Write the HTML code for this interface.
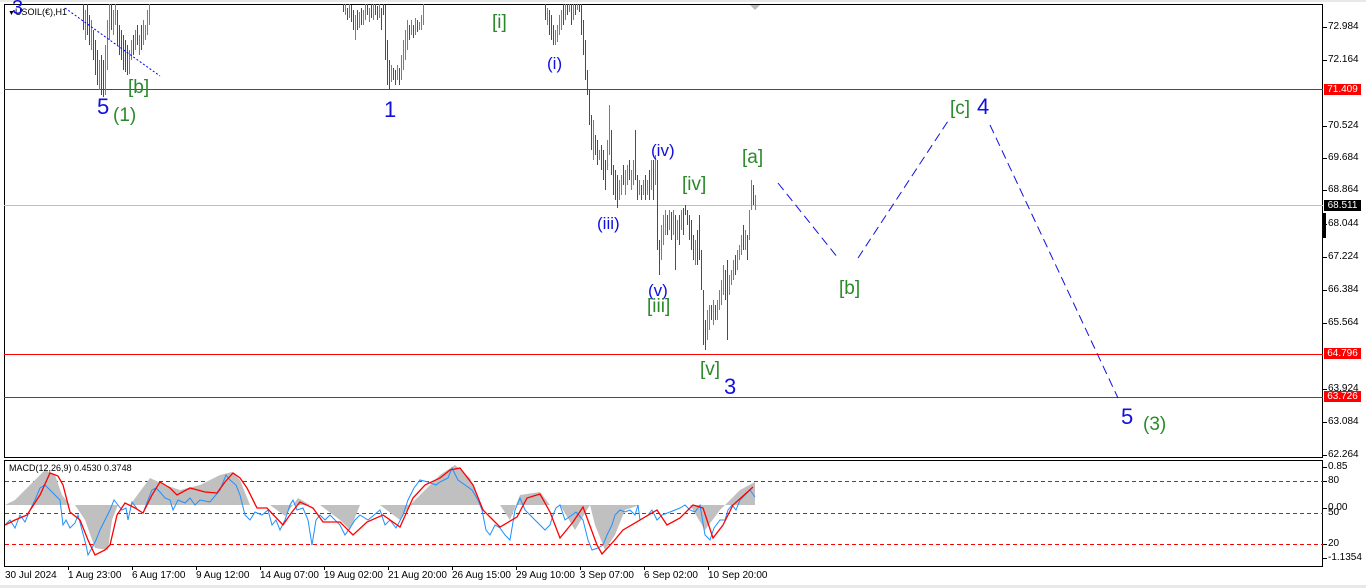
<!DOCTYPE html>
<html><head><meta charset="utf-8"><style>
body{margin:0;width:1366px;height:588px;background:#fff;overflow:hidden;font-family:"Liberation Sans",sans-serif;position:relative}
.l{position:absolute;white-space:nowrap;line-height:1}
.b{color:#1010e0;font-size:22px}
.g{color:#2a8a2a;font-size:19px}
.bs{color:#1010e0;font-size:17px}
.ax{position:absolute;font-size:10px;color:#000;left:1328px}
.t{position:absolute;font-size:10px;top:570px}
.tag{position:absolute;left:1324px;width:37px;height:11px;font-size:10px;line-height:11px;color:#fff;text-align:center}
</style></head><body>
<svg width="1366" height="588" style="position:absolute;left:0;top:0">
<rect x="0" y="0" width="1366" height="588" fill="#fff"/>
<rect x="0" y="0" width="1366" height="2" fill="#e8e8e8"/>
<rect x="0" y="585" width="1366" height="3" fill="#e8e8e8"/>
<rect x="4.5" y="4.5" width="1318" height="453" fill="none" stroke="#000"/>
<rect x="4.5" y="460.5" width="1318" height="106" fill="none" stroke="#000"/>
<line x1="4" y1="205.5" x2="1323" y2="205.5" stroke="#c0c0c0"/>
<line x1="4" y1="89.5" x2="1323" y2="89.5" stroke="#ff0000"/>
<line x1="4" y1="354.5" x2="1323" y2="354.5" stroke="#ff0000"/>
<line x1="4" y1="397.5" x2="1323" y2="397.5" stroke="#ff0000"/>
<path stroke="#000" d="M1323 27.5h4M1323 60.5h4M1323 126.5h4M1323 158.5h4M1323 190.5h4M1323 224.5h4M1323 257.5h4M1323 290.5h4M1323 323.5h4M1323 389.5h4M1323 422.5h4M1323 455.5h4M1323 467.5h4M1323 481.5h4M1323 508.5h4M1323 544.5h4M1323 558.5h4M68.5 566v4M132.5 566v4M196.5 566v4M260.5 566v4M324.5 566v4M388.5 566v4M452.5 566v4M516.5 566v4M580.5 566v4M644.5 566v4M708.5 566v4"/>
<rect x="1323" y="213" width="3" height="25" fill="#000"/>
<path stroke="#ff0000" stroke-width="1" d="M83.5 4V30M87.5 4V35M89.5 15V45M93.5 30V60M95.5 40V75M97.5 50V85M101.5 55V95M103.5 60V97M111.5 4V30M117.5 10V45M119.5 25V55M121.5 30V60M123.5 35V70M125.5 40V72M127.5 45V75M133.5 35V55M137.5 25V45M141.5 25V50M343.5 4V12M347.5 8V20M351.5 5V22M353.5 10V30M357.5 10V30M361.5 8V25M367.5 4V15M371.5 4V18M375.5 4V15M377.5 6V20M381.5 8V30M383.5 4V15M385.5 5V60M387.5 40V85M389.5 60V89M393.5 68V80M395.5 70V85M399.5 68V85M409.5 25V40M413.5 25V38M417.5 20V32M545.5 4V20M549.5 10V35M551.5 15V40M553.5 25V45M563.5 4V25M567.5 4V15M571.5 4V25M575.5 4V15M579.5 4V12M581.5 4V35M583.5 20V55M585.5 40V80M587.5 70V95M589.5 90V125M591.5 115V150M595.5 135V155M597.5 140V165M601.5 145V170M603.5 150V180M605.5 160V190M611.5 130V175M613.5 165V195M615.5 170V200M617.5 175V208M623.5 165V185M629.5 160V180M635.5 130V180M637.5 175V200M641.5 185V200M645.5 175V200M649.5 170V200M653.5 160V200M657.5 160V250M659.5 240V275M667.5 215V235M671.5 212V240M675.5 215V270M679.5 215V245M683.5 208V235M685.5 205V215M687.5 210V225M689.5 215V240M691.5 220V250M693.5 235V260M697.5 230V265M699.5 215V260M701.5 250V290M703.5 290V345M705.5 320V350M711.5 305V320M715.5 305V320M725.5 270V300M727.5 260V340M735.5 255V275M743.5 225V250M747.5 235V260M753.5 185V205"/>
<path stroke="#22bb22" stroke-width="1" d="M85.5 10V40M91.5 20V50M99.5 60V90M105.5 45V95M107.5 20V70M109.5 4V40M113.5 10V35M115.5 4V25M129.5 50V74M131.5 40V60M135.5 30V50M139.5 35V55M143.5 20V45M145.5 25V40M147.5 10V35M149.5 4V25M345.5 4V15M349.5 4V18M355.5 15V40M359.5 12V28M363.5 10V25M365.5 4V20M369.5 8V22M373.5 4V20M379.5 4V18M391.5 65V82M397.5 65V80M401.5 55V80M403.5 40V70M405.5 30V60M407.5 20V50M411.5 20V35M415.5 18V35M419.5 22V30M421.5 15V30M423.5 4V25M547.5 8V25M555.5 30V45M557.5 25V42M559.5 15V35M561.5 10V30M565.5 4V20M569.5 4V12M573.5 4V20M577.5 4V10M593.5 120V160M599.5 150V160M607.5 140V170M609.5 105V155M619.5 180V200M621.5 175V195M625.5 170V195M627.5 165V185M631.5 170V190M633.5 160V185M639.5 180V195M643.5 180V195M647.5 180V195M651.5 160V190M655.5 155V185M661.5 225V260M663.5 215V245M665.5 210V235M669.5 210V230M673.5 210V235M677.5 220V240M681.5 210V230M695.5 240V265M707.5 310V340M709.5 305V330M713.5 300V325M717.5 300V320M719.5 290V310M721.5 280V305M723.5 265V295M729.5 275V295M731.5 270V285M733.5 260V280M737.5 250V270M739.5 245V260M741.5 235V255M745.5 230V250M749.5 210V240M751.5 180V210M755.5 195V210"/>
<path stroke="#ff0000" stroke-dasharray="4,3" d="M5 481.5H1323M5 513.5H1323M5 544.5H1323"/>
<polygon points="750,5 760,5 755,10" fill="#bbb"/>
<line x1="65" y1="8" x2="160" y2="76" stroke="#00f" stroke-dasharray="2,2"/>
<path stroke="#1010e0" stroke-width="1" stroke-dasharray="9,5" fill="none" d="M778 183L838 258M858 258L950 118M990 125L1118 398"/>
<polygon fill="#c0c0c0" points="5,505 15,500 30,485 45,470 55,475 62,495 70,505 75,505 85,520 95,548 108,550 112,520 118,505 130,505 150,478 165,485 180,490 200,485 220,475 232,472 240,480 250,505 270,505 285,516 298,498 310,505 320,505 340,520 350,530 360,505 380,505 400,520 410,505 425,490 440,475 455,465 470,478 480,505 500,505 510,520 520,495 540,492 550,505 560,505 575,530 590,505 595,525 605,550 615,535 625,510 640,505 660,505 690,505 705,530 720,510 740,490 755,482 755,505"/>
<polyline fill="none" stroke="#1e90ff" stroke-width="1" points="5,525 10,520 15,528 20,515 25,522 30,510 35,500 40,488 45,485 50,490 55,495 60,500 63,525 66,520 70,528 75,523 78,515 82,530 86,545 88,555 92,548 96,540 100,530 105,520 110,510 114,500 118,505 122,510 126,508 128,520 132,502 138,510 143,513 148,500 152,490 156,488 160,492 165,498 170,500 173,510 178,500 185,503 190,498 195,505 200,500 210,502 220,490 226,475 230,480 236,485 240,495 245,515 250,520 255,512 262,515 268,510 272,525 276,520 280,530 285,520 290,505 293,500 297,510 303,508 308,520 312,545 316,520 320,515 325,520 330,515 340,525 345,535 350,528 355,520 360,515 368,520 374,515 380,510 385,525 390,520 396,528 403,515 408,500 414,488 420,480 428,482 436,485 440,482 448,478 452,468 458,480 465,485 472,490 478,500 482,510 486,530 490,535 495,525 500,528 505,535 510,540 515,510 520,498 525,510 530,515 535,520 540,525 545,530 550,525 553,515 556,508 560,505 565,520 572,515 576,512 583,520 588,540 592,550 598,548 603,545 607,535 612,525 615,515 620,510 625,512 630,510 635,515 638,505 640,520 648,515 652,510 657,520 662,515 670,512 675,510 680,508 685,505 690,510 695,512 700,505 705,535 710,540 714,528 720,520 725,520 728,510 732,505 736,510 740,500 745,495 750,490 755,497"/>
<polyline fill="none" stroke="#ff0000" stroke-width="1.3" points="5,525 15,520 27,515 40,495 50,473 58,476 63,485 70,512 80,520 88,540 95,555 105,550 110,545 117,515 125,503 135,508 143,513 152,495 160,482 170,488 177,495 190,488 205,492 217,493 225,482 233,473 240,478 247,488 257,508 267,508 283,525 292,512 300,502 313,508 323,522 340,522 353,535 367,522 383,515 400,527 413,498 425,485 440,478 450,470 460,468 473,485 483,510 500,527 517,517 527,498 540,494 550,512 560,538 573,522 583,507 597,545 602,554 613,542 623,530 640,520 657,510 667,525 680,518 693,505 703,508 713,538 723,525 733,505 753,487"/>
</svg>
<div class="l" style="left:8px;top:8px;font-size:9px"><span style="font-size:7px">▼</span>USOIL(€),H1</div>
<div class="l b" style="left:12px;top:-2px;font-size:20px">3</div>
<div class="l b" style="left:97px;top:96px">5</div>
<div class="l g" style="left:113px;top:106px">(1)</div>
<div class="l g" style="left:128px;top:78px">[b]</div>
<div class="l b" style="left:384px;top:99px">1</div>
<div class="l g" style="left:492px;top:13px">[i]</div>
<div class="l bs" style="left:547px;top:55px">(i)</div>
<div class="l bs" style="left:651px;top:142px">(iv)</div>
<div class="l bs" style="left:597px;top:215px">(iii)</div>
<div class="l g" style="left:682px;top:175px">[iv]</div>
<div class="l g" style="left:742px;top:148px">[a]</div>
<div class="l bs" style="left:648px;top:282px">(v)</div>
<div class="l g" style="left:647px;top:297px">[iii]</div>
<div class="l g" style="left:700px;top:360px">[v]</div>
<div class="l b" style="left:724px;top:376px">3</div>
<div class="l g" style="left:839px;top:279px">[b]</div>
<div class="l g" style="left:950px;top:99px">[c]</div>
<div class="l b" style="left:977px;top:96px">4</div>
<div class="l b" style="left:1121px;top:406px">5</div>
<div class="l g" style="left:1143px;top:415px">(3)</div>
<div class="l" style="left:9px;top:464px;font-size:9px">MACD(12,26,9) 0.4530 0.3748</div>
<div class="ax" style="top:21px">72.984</div>
<div class="ax" style="top:54px">72.164</div>
<div class="ax" style="top:120px">70.524</div>
<div class="ax" style="top:152px">69.684</div>
<div class="ax" style="top:184px">68.864</div>
<div class="ax" style="top:218px">68.044</div>
<div class="ax" style="top:251px">67.224</div>
<div class="ax" style="top:284px">66.384</div>
<div class="ax" style="top:317px">65.564</div>
<div class="ax" style="top:383px">63.924</div>
<div class="ax" style="top:416px">63.084</div>
<div class="ax" style="top:449px">62.264</div>
<div class="ax" style="top:461px">0.85</div>
<div class="ax" style="top:475px">80</div>
<div class="ax" style="top:502px">0.00</div>
<div class="ax" style="top:507px">50</div>
<div class="ax" style="top:538px">20</div>
<div class="ax" style="top:552px">-1.1354</div>
<div class="tag" style="top:84px;background:#f00">71.409</div>
<div class="tag" style="top:200px;background:#000">68.511</div>
<div class="tag" style="top:348px;background:#f00">64.796</div>
<div class="tag" style="top:391px;background:#f00">63.726</div>
<div class="t" style="left:5px">30 Jul 2024</div>
<div class="t" style="left:68px">1 Aug 23:00</div>
<div class="t" style="left:132px">6 Aug 17:00</div>
<div class="t" style="left:196px">9 Aug 12:00</div>
<div class="t" style="left:260px">14 Aug 07:00</div>
<div class="t" style="left:324px">19 Aug 02:00</div>
<div class="t" style="left:388px">21 Aug 20:00</div>
<div class="t" style="left:452px">26 Aug 15:00</div>
<div class="t" style="left:516px">29 Aug 10:00</div>
<div class="t" style="left:580px">3 Sep 07:00</div>
<div class="t" style="left:644px">6 Sep 02:00</div>
<div class="t" style="left:708px">10 Sep 20:00</div>
</body></html>
